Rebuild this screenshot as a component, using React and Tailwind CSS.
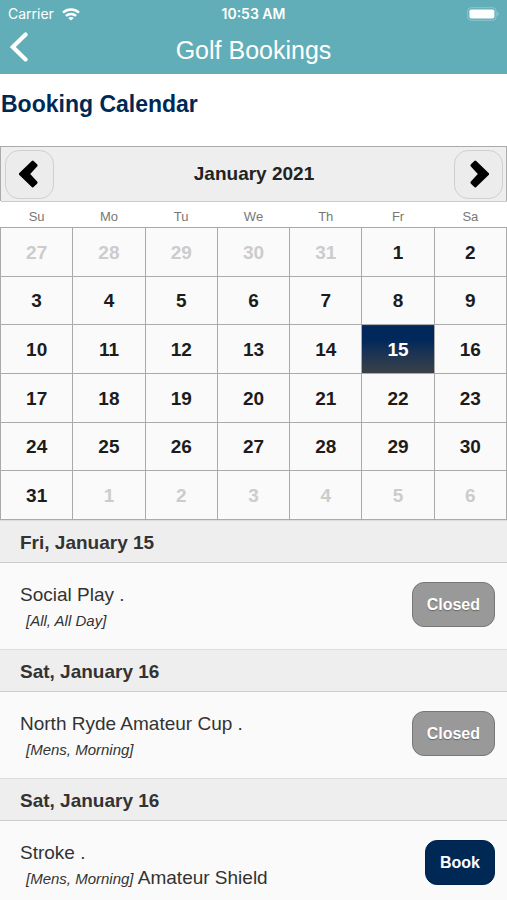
import clsx from "clsx";

const weekdays = ["Su", "Mo", "Tu", "We", "Th", "Fr", "Sa"];

const weeks = [
  [27, 28, 29, 30, 31, 1, 2],
  [3, 4, 5, 6, 7, 8, 9],
  [10, 11, 12, 13, 14, 15, 16],
  [17, 18, 19, 20, 21, 22, 23],
  [24, 25, 26, 27, 28, 29, 30],
  [31, 1, 2, 3, 4, 5, 6],
];

const bookings = [
  { date: "Fri, January 15", title: "Social Play .", slot: "[All, All Day]", open: false },
  { date: "Sat, January 16", title: "North Ryde Amateur Cup .", slot: "[Mens, Morning]", open: false },
  { date: "Sat, January 16", title: "Stroke .", slot: "[Mens, Morning]", note: "Amateur Shield", open: true },
];

const isOutside = (week, day) => (week === 0 && day > 7) || (week === 5 && day < 7);

const StatusBar = () => (
  <div className="grid grid-cols-3 items-center h-7 px-2 font-['Inter',sans-serif] text-sm">
    <div className="flex items-center gap-2">
      <span>Carrier</span>
      <svg viewBox="0 0 18 13" className="w-[18px] h-[13px]" fill="none" stroke="currentColor" strokeWidth="2.5">
        <path d="M1 4.6C5.4 0.5 12.6 0.5 17 4.6" />
        <path d="M3.9 7.9C6.8 5.2 11.2 5.2 14.1 7.9" />
        <path d="M9 12.6L6.2 10C7.8 8.6 10.2 8.6 11.8 10Z" fill="currentColor" stroke="none" />
      </svg>
    </div>
    <span className="text-center font-semibold">10:53 AM</span>
    <svg viewBox="0 0 32 14" className="w-8 h-3.5 justify-self-end" fill="none">
      <rect x="0.7" y="0.7" width="28.4" height="12.6" rx="3.4" stroke="#8fc6cd" strokeWidth="1" />
      <rect x="2.4" y="2.4" width="25" height="9.2" rx="1.8" fill="#fff" />
      <path d="M30.3 5C31.8 5.5 31.8 8.5 30.3 9Z" fill="#a5d2d8" />
    </svg>
  </div>
);

const Header = () => (
  <header className="bg-[#61aeb8] text-white">
    <StatusBar />
    <div className="grid grid-cols-[40px_1fr_40px] h-[46px] items-center">
      <button type="button" aria-label="Back" className="pl-2 pb-2.5">
        <svg viewBox="0 0 22 32" className="w-[22px] h-8" fill="none" stroke="currentColor" strokeWidth="4.2" strokeLinecap="round">
          <path d="M17.6 4.6L4.8 17L17.6 29.4" />
        </svg>
      </button>
      <h1 className="pb-0.5 text-center text-[25px] leading-8">Golf Bookings</h1>
    </div>
  </header>
);

const MonthButton = ({ label, d }) => (
  <button
    type="button"
    aria-label={label}
    className="flex items-center justify-center size-[49px] rounded-[14px] border border-[#cfcfcf] bg-[#ececec] text-black"
  >
    <svg viewBox="0 0 22 28" className="w-[22px] h-7" fill="currentColor" stroke="currentColor" strokeWidth="3" strokeLinejoin="round">
      <path d={d} />
    </svg>
  </button>
);

const Calendar = () => (
  <section className="border-t border-[#aaa]">
    <div className="flex items-center justify-between h-[54px] pl-1 pr-[3px] border-x border-[#aaa] bg-[#eee]">
      <MonthButton label="Previous month" d="M13.8 2.2L17 5.4L9.2 14L17 22.6L13.8 25.8L1.4 14Z" />
      <h3 className="font-bold text-[19px] text-[#222]">January 2021</h3>
      <MonthButton label="Next month" d="M8.2 2.2L5 5.4L12.8 14L5 22.6L8.2 25.8L20.6 14Z" />
    </div>
    <table className="w-full h-[319px] table-fixed border-collapse text-center">
      <thead>
        <tr className="h-[26px] border-t border-[#ccc]">
          {weekdays.map((name) => (
            <th key={name} className="pt-1 font-normal text-[13px] leading-4 text-[#777]">
              {name}
            </th>
          ))}
        </tr>
      </thead>
      <tbody>
        {weeks.map((days, week) => (
          <tr key={week}>
            {days.map((day) => (
              <td
                key={day}
                className={clsx(
                  "p-0 border border-[#aaa]",
                  day === 15 ? "bg-gradient-to-b from-[#00285a] from-30% to-[#3b4147]" : "bg-[#fafafa]"
                )}
              >
                <button
                  type="button"
                  className={clsx(
                    "block w-full h-[47px] pt-0.5 font-bold text-[19px]",
                    day === 15 && "text-white",
                    isOutside(week, day) && "text-[#ccc]",
                    day !== 15 && !isOutside(week, day) && "text-[#1c1c1c]"
                  )}
                >
                  {day}
                </button>
              </td>
            ))}
          </tr>
        ))}
      </tbody>
    </table>
  </section>
);

const Booking = ({ booking }) => (
  <li>
    <h3 className="flex items-center h-[43px] pt-1 px-5 border-y border-t-[#ddd] border-b-[#ccc] bg-[#eee] font-bold text-[19px]">
      {booking.date}
    </h3>
    <div className="flex items-center justify-between h-[86px] pl-5 pr-3 pb-1 bg-[#fafafa]">
      <div className="pt-1.5 text-[19px] leading-[25px]">
        <p>{booking.title}</p>
        <p>
          <em className="pl-1.5 text-[15px]">{booking.slot}</em> {booking.note}
        </p>
      </div>
      <button
        type="button"
        className={clsx(
          "h-[45px] px-3.5 pt-0.5 rounded-xl border font-bold text-base text-white",
          booking.open
            ? "border-[#00234d] bg-[#002855]"
            : "border-[#777] bg-[#999] [text-shadow:0_1px_1px_#666]"
        )}
      >
        {booking.open ? "Book" : "Closed"}
      </button>
    </div>
  </li>
);

export default function App() {
  return (
    <div className="flex flex-col h-screen overflow-hidden bg-white font-['Liberation_Sans',Arial,sans-serif] text-[#333]">
      <Header />
      <main>
        <h2 className="pt-3.5 pb-[26px] pl-px font-bold text-[23px] leading-8 text-[#002855]">Booking Calendar</h2>
        <Calendar />
        <ul>
          {bookings.map((booking) => (
            <Booking key={booking.title} booking={booking} />
          ))}
        </ul>
      </main>
    </div>
  );
}
